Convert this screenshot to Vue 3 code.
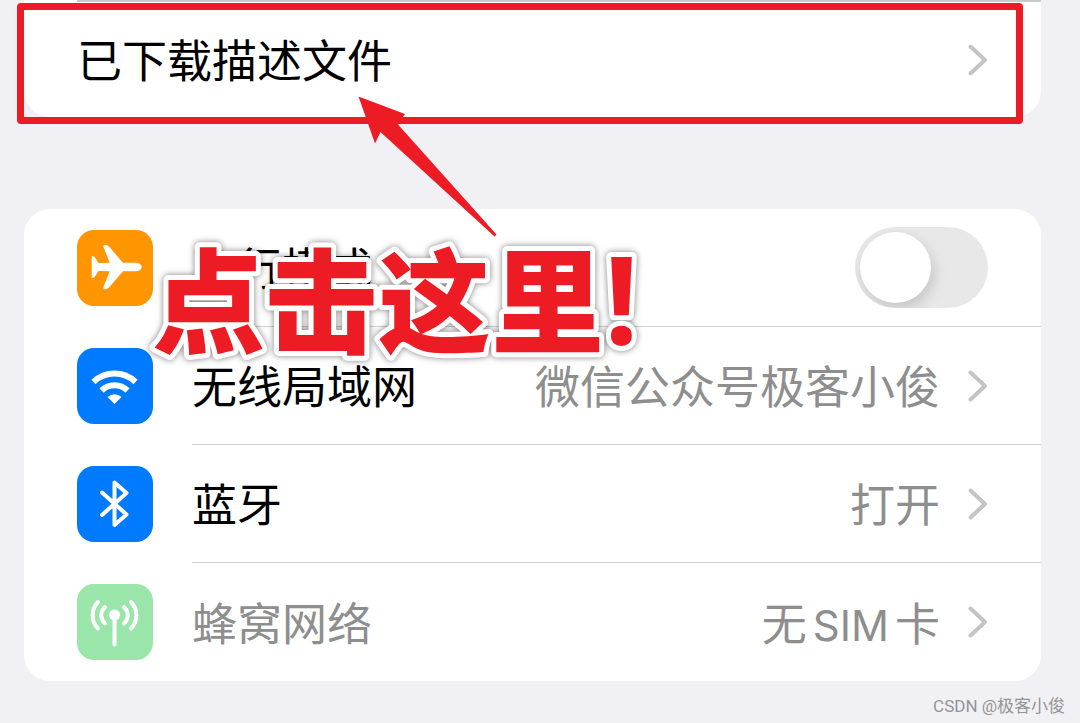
<script setup>
import { ref } from 'vue'

const airplane = ref(false)
const links = [
  { id: 'wifi', label: '无线局域网', before: '微信公众号极客小俊' },
  { id: 'bluetooth', label: '蓝牙', before: '打开' },
  { id: 'cellular', label: '蜂窝网络', before: '无', latin: 'SIM', after: '卡' },
]
</script>

<template>
  <main class="page">
    <section class="card card-top">
      <a class="row" href="#profile">
        <span class="body body-last">
          <span class="label">已下载描述文件</span>
          <svg class="chevron" viewBox="0 0 20 32" aria-hidden="true"><path d="M2.5 2.5 17 16 2.5 29.5" /></svg>
        </span>
      </a>
      <div class="frame"></div>
    </section>

    <section class="card">
      <div class="row">
        <span class="tile airplane">
          <svg viewBox="0 0 76 76" aria-hidden="true">
            <path d="M59.5 32.7H46L32 16.5Q30.5 14.7 28 14.7Q26 14.7 26.5 17.2L32.7 32.7L21.5 33L18 27.5Q17 26 14.7 26V48Q17 48 18 46.5L21.5 41L32.7 41.3L26.5 56.8Q26 59.3 28 59.3Q30.5 59.3 32 57.5L46 41.3H59.5Q64.7 40.5 64.7 37Q64.7 33.5 59.5 32.7Z" />
          </svg>
        </span>
        <span class="body">
          <label class="label" for="airplane">飞行模式</label>
          <input id="airplane" v-model="airplane" class="switch" type="checkbox" role="switch" />
        </span>
      </div>
      <a v-for="(item, i) in links" :key="item.id" class="row" :class="{ muted: item.id === 'cellular' }" :href="'#' + item.id">
        <span class="tile" :class="item.id">
          <svg v-if="item.id === 'wifi'" viewBox="0 0 76 76" aria-hidden="true">
            <path class="line wide" d="M16.5 34A30.5 30.5 0 0 1 58.5 34M24.5 42.5A18.5 18.5 0 0 1 50.5 42.5" />
            <path d="M37.5 56L30.5 49A10 10 0 0 1 44.5 49Z" />
          </svg>
          <svg v-else-if="item.id === 'bluetooth'" viewBox="0 0 76 76" aria-hidden="true">
            <path class="line round" d="M25 26.5L49.5 48.5L37.5 59V16.5L49.5 27L25 49" />
          </svg>
          <svg v-else viewBox="0 0 76 76" aria-hidden="true">
            <circle cx="37.5" cy="31" r="5.5" />
            <path class="line round" d="M37.5 33V60.5M28 23A11 11 0 0 0 28 39.5M47 23A11 11 0 0 1 47 39.5M21 18A19 19 0 0 0 21 44.5M54 18A19 19 0 0 1 54 44.5" />
          </svg>
        </span>
        <span class="body" :class="{ 'body-last': i === links.length - 1 }">
          <span class="label">{{ item.label }}</span>
          <span class="value">{{ item.before }}<span v-if="item.latin" class="latin">{{ item.latin }}</span>{{ item.after }}</span>
          <svg class="chevron" viewBox="0 0 20 32" aria-hidden="true"><path d="M2.5 2.5 17 16 2.5 29.5" /></svg>
        </span>
      </a>
    </section>

    <svg class="arrow" viewBox="0 0 140 142" aria-hidden="true">
      <path d="M0.5 0.5L47 18L40 28.5L138.5 138.5L136.5 140.5L22.5 36L17 47.5Z" />
    </svg>
    <svg class="callout" viewBox="0 0 520 140" role="img" aria-label="点击这里!">
      <text x="10" y="108">点击这里<tspan class="bang">!</tspan></text>
    </svg>
    <footer class="credit">CSDN @极客小俊</footer>
  </main>
</template>

<style>
body {
  background: #f0f0f5;
}
</style>

<style scoped>
.page {
  position: relative;
  box-sizing: border-box;
  min-height: 100vh;
  overflow: hidden;
  padding: 0 39px 0 24px;
  font-family: "Liberation Sans", "Noto Sans CJK SC", sans-serif;
  color: #000;
}
.card {
  background: #fff;
  border-radius: 26px;
}
.card-top {
  position: relative;
  margin-bottom: 92px;
  border-radius: 0 0 26px 26px;
}
.card-top::before {
  content: "";
  display: block;
  height: 2px;
  margin-left: 53px;
  background: #c9c9cb;
}
.row {
  display: flex;
  align-items: center;
  gap: 39px;
  height: 118px;
  padding-left: 53px;
  color: inherit;
  text-decoration: none;
}
.card-top .row {
  height: 115px;
}
.body {
  display: flex;
  flex: 1;
  align-items: center;
  box-sizing: border-box;
  height: 100%;
  padding-right: 53px;
  border-bottom: 1px solid #d2d2d4;
}
.body-last {
  border-bottom: 0;
}
.label,
.value {
  padding-top: 7px;
  font-size: 45px;
  line-height: 64px;
  white-space: nowrap;
}
.label {
  flex: 1;
}
.value,
.muted {
  color: #8e8e8e;
}
.latin {
  margin: 0 6px;
  font-family: Inter, sans-serif;
  font-size: 42px;
}
.chevron {
  width: 20px;
  height: 32px;
  margin-left: 28px;
}
.chevron path {
  fill: none;
  stroke: #c4c4c6;
  stroke-width: 4;
  stroke-linecap: round;
  stroke-linejoin: round;
}
.tile {
  width: 76px;
  height: 76px;
  border-radius: 17px;
}
.tile svg {
  display: block;
  fill: #fff;
}
.tile .line {
  fill: none;
  stroke: #fff;
  stroke-width: 4;
}
.tile .wide {
  stroke-width: 6;
}
.tile .round {
  stroke-linecap: round;
  stroke-linejoin: round;
}
.airplane {
  background: #ff9500;
}
.wifi,
.bluetooth {
  background: #007aff;
}
.cellular {
  background: #9ae5aa;
}
.switch {
  appearance: none;
  box-sizing: border-box;
  width: 133px;
  height: 81px;
  margin: 0;
  padding: 5px;
  overflow: hidden;
  border-radius: 41px;
  background: #e8e8e8;
}
.switch::before {
  content: "";
  display: block;
  width: 71px;
  height: 71px;
  border-radius: 50%;
  background: #fff;
  box-shadow: 3px 6px 14px rgba(0, 0, 0, 0.15);
}
.switch:checked {
  background: #34c759;
}
.switch:checked::before {
  margin-left: auto;
}
.frame {
  position: absolute;
  top: 3px;
  right: 18px;
  bottom: -7px;
  left: -7px;
  border: 7px solid #ed1c24;
  border-radius: 4px;
  pointer-events: none;
}
.arrow {
  position: absolute;
  top: 96px;
  left: 358px;
  width: 140px;
  height: 142px;
  fill: #ed1c24;
  pointer-events: none;
}
.callout {
  position: absolute;
  top: 236px;
  left: 142px;
  width: 520px;
  height: 140px;
  overflow: visible;
  font-family: "Noto Sans CJK SC", sans-serif;
  font-size: 113px;
  font-weight: 900;
  fill: #ed1c24;
  stroke: #fff;
  stroke-width: 10px;
  stroke-linejoin: round;
  paint-order: stroke fill;
  filter: drop-shadow(0 0 3px rgba(0, 0, 0, 0.5));
  pointer-events: none;
}
.bang {
  font-family: "Open Sans", sans-serif;
  font-size: 122px;
  font-weight: 700;
}
.credit {
  position: absolute;
  right: 15px;
  bottom: 5px;
  font-family: Roboto, "Noto Sans CJK SC", sans-serif;
  font-size: 17px;
  line-height: 24px;
  color: #949498;
}
</style>
